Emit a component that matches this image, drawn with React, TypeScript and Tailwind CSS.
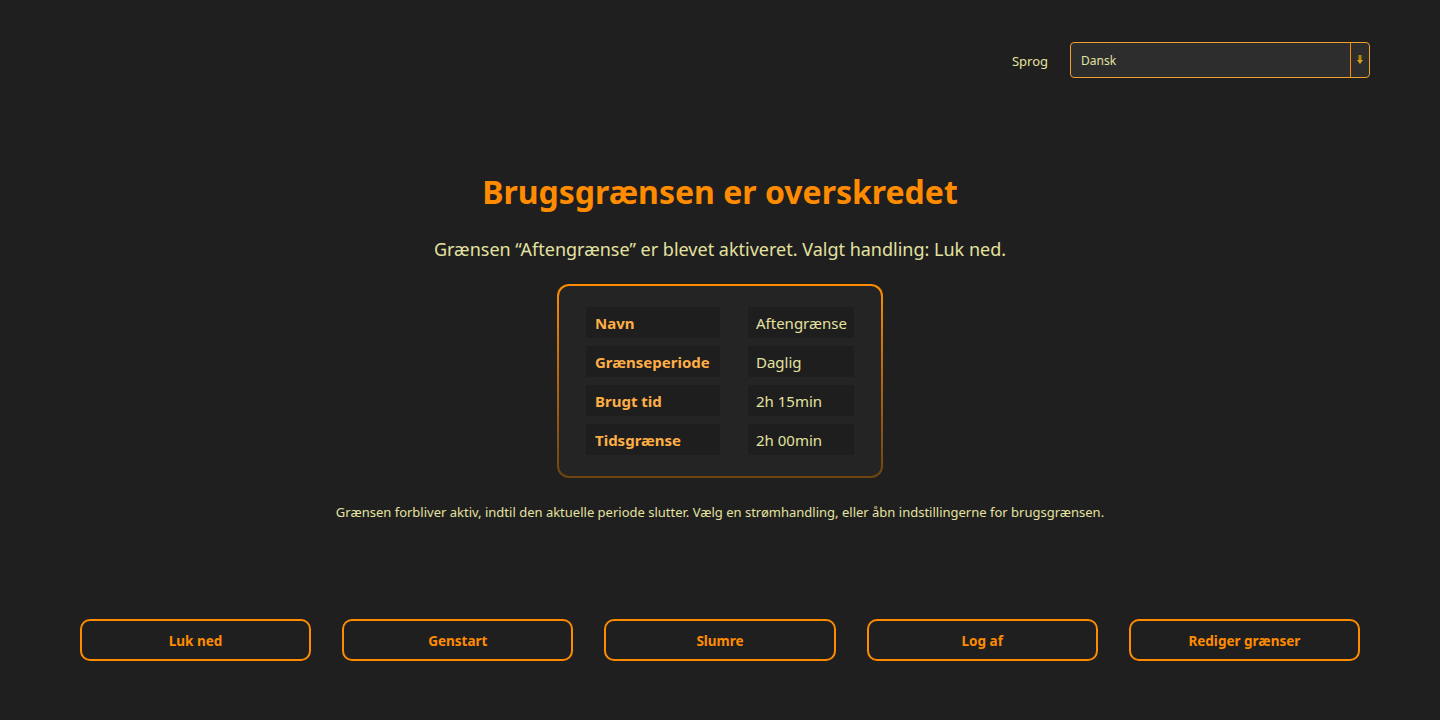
import React from "react";

const rows = [
  { label: "Navn", value: "Aftengrænse" },
  { label: "Grænseperiode", value: "Daglig" },
  { label: "Brugt tid", value: "2h 15min" },
  { label: "Tidsgrænse", value: "2h 00min" },
];

const actions = ["Luk ned", "Genstart", "Slumre", "Log af", "Rediger grænser"];

const App: React.FC = () => {
  return (
    <div
      className="min-h-screen h-[720px] bg-[#1f1f1f] flex flex-col"
      style={{ fontFamily: '"Noto Sans", "Open Sans", sans-serif' }}
    >
      {/* Language picker */}
      <div className="flex justify-end items-center pt-[42px] pr-[70px] gap-[22px]">
        <span className="text-[13px] pt-[3px] text-[#e4e2a0]">Sprog</span>
        <div className="w-[300px] h-[36px] flex border border-[#f0a030] rounded-[4px] bg-[#2d2d2d]">
          <div className="flex-1 flex items-center pl-[10px] pt-[1px] text-[12px] text-[#e4e2a0]">Dansk</div>
          <div className="w-[19px] border-l border-[#ff8c00] flex items-center justify-center">
            <svg width="8" height="12" viewBox="0 0 8 12">
              <rect x="2.5" y="1" width="3" height="5" fill="#b8860b" />
              <path d="M1 6 H7 L4 10 Z" fill="#e0a020" />
            </svg>
          </div>
        </div>
      </div>

      {/* Message */}
      <div className="flex flex-col items-center mt-[94px]">
        <h1 className="text-[32px] leading-[40px] font-bold text-[#ff8c00]">Brugsgrænsen er overskredet</h1>
        <p className="mt-[24px] text-[18px] leading-[26px] text-[#e4e2a0]">
          Grænsen “Aftengrænse” er blevet aktiveret. Valgt handling: Luk ned.
        </p>

        <div className="mt-[22px] rounded-[12px] p-[2px] bg-gradient-to-b from-[#ff8c00] to-[#6e4410]">
          <div className="rounded-[10px] bg-[#242424] px-[27px] py-[21px]">
            <div className="grid grid-cols-[134px_106px] gap-x-[28px] gap-y-[8px]">
              {rows.map((r) => (
                <React.Fragment key={r.label}>
                  <div className="h-[31px] pt-[1px] bg-[#1e1e1e] flex items-center pl-[9px] text-[15px] font-bold text-[#ffae45]">
                    {r.label}
                  </div>
                  <div className="h-[31px] pt-[1px] bg-[#1e1e1e] flex items-center pl-[8px] text-[15px] text-[#e4e2a0]">
                    {r.value}
                  </div>
                </React.Fragment>
              ))}
            </div>
          </div>
        </div>

        <p className="mt-[25px] text-[13px] leading-[18px] text-[#e4e2a0]">
          Grænsen forbliver aktiv, indtil den aktuelle periode slutter. Vælg en strømhandling, eller åbn indstillingerne for brugsgrænsen.
        </p>
      </div>

      {/* Actions */}
      <div className="mt-auto mb-[59px] px-[80px] grid grid-cols-5 gap-[31px]">
        {actions.map((a) => (
          <button
            key={a}
            className="h-[42px] pt-[2px] rounded-[10px] border-2 border-[#ff8c00] text-[13.5px] font-bold text-[#ff8c00] bg-transparent"
          >
            {a}
          </button>
        ))}
      </div>
    </div>
  );
};

export default App;
